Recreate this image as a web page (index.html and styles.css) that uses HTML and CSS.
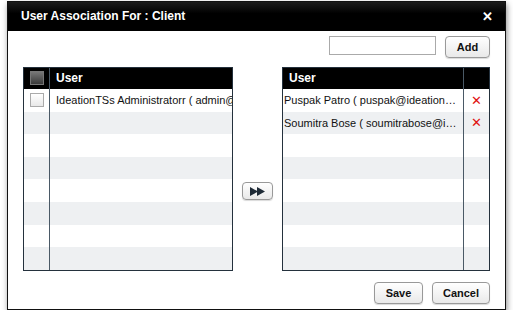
FILE: index.html
```html
<!DOCTYPE html>
<html>
<head>
  <title>User Association</title>
  <link rel="stylesheet" href="styles.css">
</head>
<body>
  <div class="dialog">
    <header class="dialog-title">
      <span class="caption">User Association For : Client</span>
      <span class="close">&#x2715;</span>
    </header>
    <main class="dialog-body">
      <div class="toolbar">
        <input type="text" class="search">
        <button class="btn">Add</button>
      </div>
      <div class="lists">
        <div class="grid left">
          <div class="row head">
            <div class="cell chk"><span class="box dark"></span></div>
            <div class="cell name">User</div>
          </div>
          <div class="row">
            <div class="cell chk"><span class="box"></span></div>
            <div class="cell name clip">IdeationTSs Administratorr ( admin@ideationts.com )</div>
          </div>
          <div class="row alt"><div class="cell chk"></div><div class="cell name"></div></div>
          <div class="row"><div class="cell chk"></div><div class="cell name"></div></div>
          <div class="row alt"><div class="cell chk"></div><div class="cell name"></div></div>
          <div class="row"><div class="cell chk"></div><div class="cell name"></div></div>
          <div class="row alt"><div class="cell chk"></div><div class="cell name"></div></div>
          <div class="row"><div class="cell chk"></div><div class="cell name"></div></div>
          <div class="row alt"><div class="cell chk"></div><div class="cell name"></div></div>
        </div>
        <div class="mover">
          <button class="btn move">
            <svg width="16" height="9" viewBox="0 0 16 9"><path d="M0 0L8 4.5L0 9Z M7 0L15 4.5L7 9Z" fill="#1e2a36"/></svg>
          </button>
        </div>
        <div class="grid right">
          <div class="row head">
            <div class="cell name">User</div>
            <div class="cell act"></div>
          </div>
          <div class="row">
            <div class="cell name ell">Puspak Patro ( puspak@ideationts.com )</div>
            <div class="cell act"><span class="del">&#x2715;</span></div>
          </div>
          <div class="row alt">
            <div class="cell name ell">Soumitra Bose ( soumitrabose@ideationts.com )</div>
            <div class="cell act"><span class="del">&#x2715;</span></div>
          </div>
          <div class="row"><div class="cell name"></div><div class="cell act"></div></div>
          <div class="row alt"><div class="cell name"></div><div class="cell act"></div></div>
          <div class="row"><div class="cell name"></div><div class="cell act"></div></div>
          <div class="row alt"><div class="cell name"></div><div class="cell act"></div></div>
          <div class="row"><div class="cell name"></div><div class="cell act"></div></div>
          <div class="row alt"><div class="cell name"></div><div class="cell act"></div></div>
        </div>
      </div>
      <div class="footer">
        <button class="btn save">Save</button>
        <button class="btn cancel">Cancel</button>
      </div>
    </main>
  </div>
</body>
</html>
```

FILE: styles.css
```css
html {
    background: #fff;
}
body {
    margin: 0;
    font-family: "Liberation Sans", Arial, sans-serif;
    font-size: 12px;
    color: #111;
}
.dialog {
    width: 497px;
    height: 307px;
    margin: 1px 0 0 7px;
    border: 1px solid #111;
    background: #fff;
    display: flex;
    flex-direction: column;
    box-shadow: 1px 3px 6px rgba(0, 0, 0, .45);
}
.dialog-title {
    height: 29px;
    flex: none;
    display: flex;
    align-items: center;
    justify-content: space-between;
    padding: 0 12px 0 13px;
    background: linear-gradient(#1c1c1c, #000 40%);
    color: #fff;
}
.caption {
    font-weight: bold;
    font-size: 12px;
    margin-top: -1px;
}
.close {
    font-weight: bold;
    font-size: 13px;
    margin-top: -1px;
}
.dialog-body {
    flex: 1;
    display: flex;
    flex-direction: column;
    padding: 0 15px;
}
.toolbar {
    display: flex;
    justify-content: flex-end;
    align-items: flex-start;
    gap: 9px;
    margin-top: 5px;
    height: 22px;
}
.search {
    width: 107px;
    height: 19px;
    box-sizing: border-box;
    border: 1px solid #aaa;
    margin: 0;
    padding: 0 3px;
}
.btn {
    font-family: "Liberation Sans", Arial, sans-serif;
    font-size: 11px;
    font-weight: bold;
    color: #111;
    height: 22px;
    margin: 0;
    padding: 0;
    border: 1px solid #999;
    border-radius: 4px;
    background: linear-gradient(#fff, #e9e9e9);
    box-shadow: 0 1px 1px rgba(0, 0, 0, .15);
}
.toolbar .btn {
    width: 45px;
}
.lists {
    display: flex;
    margin-top: 9px;
    height: 204px;
}
.grid {
    border: 1px solid #24313d;
    display: flex;
    flex-direction: column;
    overflow: hidden;
}
.grid.left {
    width: 208px;
}
.grid.right {
    width: 206px;
}
.row {
    display: flex;
    height: 22.75px;
    background: #fff;
    font-size: 11px;
}
.row.alt {
    background: #eef0f2;
}
.row.head {
    height: 21px;
    background: #000;
    color: #fff;
    font-weight: bold;
    font-size: 12px;
}
.cell {
    display: flex;
    align-items: center;
    overflow: hidden;
    white-space: nowrap;
}
.cell.chk {
    width: 25px;
    flex: none;
    justify-content: center;
    border-right: 1px solid #4a5966;
}
.cell.name {
    flex: 1;
    padding-left: 7px;
    min-width: 0;
}
.left .cell.name {
    padding-left: 6px;
}
.right .cell.name {
    padding-left: 1px;
}
.right .row.head .cell.name {
    padding-left: 6px;
}
.cell.clip {
    text-overflow: clip;
}
.cell.ell {
    display: block;
    line-height: 22px;
    padding-right: 4px;
    text-overflow: ellipsis;
}
.cell.act {
    width: 25px;
    flex: none;
    justify-content: center;
    border-left: 1px solid #4a5966;
}
.box {
    width: 12px;
    height: 12px;
    border: 1px solid #aaa;
    background: linear-gradient(#fff, #e8e8e8);
}
.box.dark {
    border-color: #777;
    background: linear-gradient(#777, #3a3a3a);
}
.del {
    color: #e01010;
    font-size: 13px;
    line-height: 1;
}
.mover {
    width: 49px;
    flex: none;
    display: flex;
    justify-content: center;
    padding-top: 115px;
}
.btn.move {
    width: 31px;
    height: 18px;
    display: flex;
    align-items: center;
    justify-content: center;
}
.footer {
    display: flex;
    justify-content: flex-end;
    gap: 9px;
    margin-top: 11px;
}
.btn.save {
    width: 49px;
}
.btn.cancel {
    width: 58px;
}
```
